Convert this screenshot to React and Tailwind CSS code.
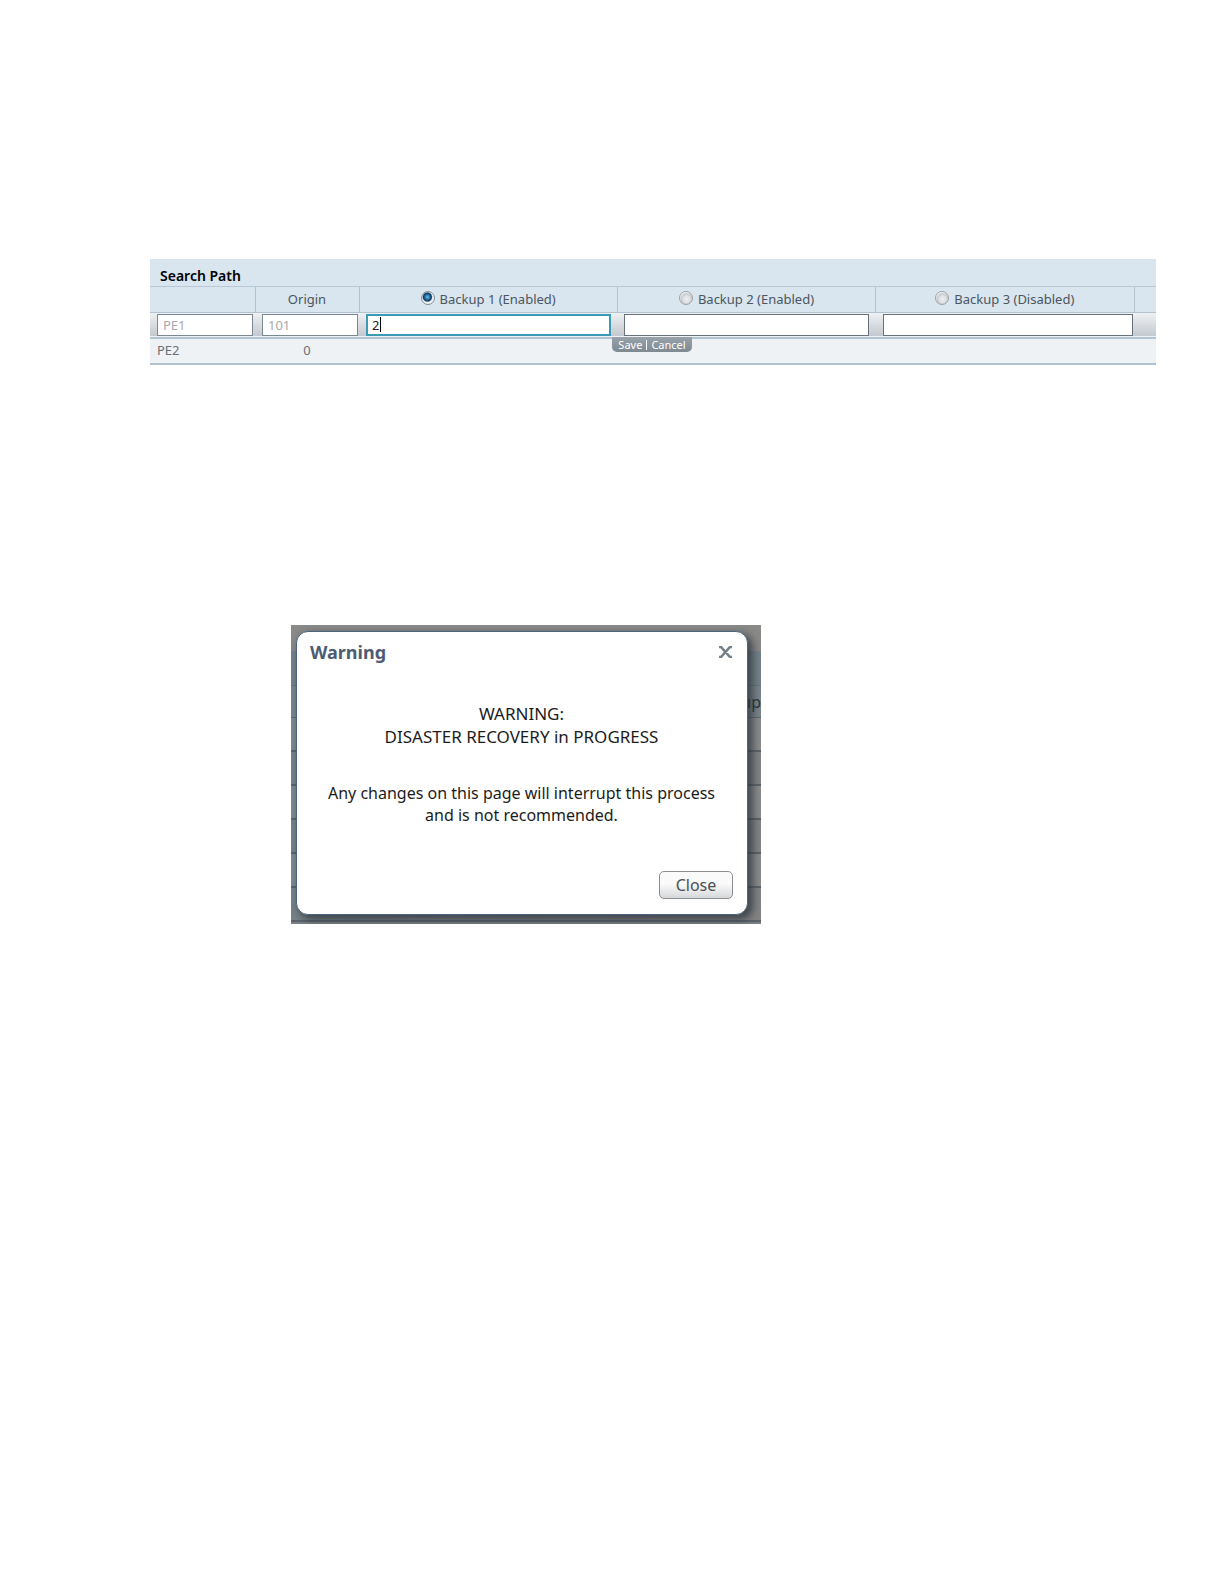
import React, { useState } from "react";

const backups = [
  { id: 1, label: "Backup 1 (Enabled)" },
  { id: 2, label: "Backup 2 (Enabled)" },
  { id: 3, label: "Backup 3 (Disabled)" },
];

const headCell = "border-r border-[#b3c2ce] p-0 font-normal";
const field = "block h-[22px] w-full border bg-white px-[5px] leading-4 outline-none";

function SearchPath() {
  const [selected, setSelected] = useState(1);
  return (
    <section className="relative text-[13px] text-[#4b565e]">
      <table className="w-full table-fixed border-collapse">
        <caption className="h-7 border-b border-[#b9c8d4] bg-[#d9e5ef] px-[10px] pt-[7px] text-left text-sm leading-5 font-semibold text-black">
          Search Path
        </caption>
        <colgroup>
          <col className="w-[105px]" />
          <col className="w-[104px]" />
          <col />
          <col />
          <col />
          <col className="w-[22px]" />
        </colgroup>
        <thead>
          <tr className="h-[25px] border-b border-[#b3c2ce] bg-[#d9e5ef]">
            <th className={headCell} aria-label="Name" />
            <th scope="col" className={headCell}>Origin</th>
            {backups.map((b) => (
              <th key={b.id} scope="col" className={headCell}>
                <label className="flex items-center justify-center gap-[5px]">
                  <input
                    type="radio"
                    name="backup"
                    checked={selected === b.id}
                    onChange={() => setSelected(b.id)}
                    className="mb-0.5 size-[14px] appearance-none rounded-full border border-[#9aa2a8] bg-[radial-gradient(circle_at_55%_60%,#f0f0f1_0,#dcdde0_40%,#c6c9cc_55%,#f5f5f5_70%)] checked:border-[#7f8e98] checked:bg-[radial-gradient(circle_at_45%_42%,#6fc3ee_0,#1f6fa8_25%,#173a56_42%,#eef2f5_55%)]"
                  />
                  <span>{b.label}</span>
                </label>
              </th>
            ))}
            <th className="p-0" aria-label="More" />
          </tr>
        </thead>
        <tbody>
          <tr className="h-[26px] border-b-2 border-[#b0c5d4] bg-linear-to-b from-[#f1f3f5] to-[#c3c9cf]">
            <td className="py-0 pr-[2px] pl-[7px]">
              <input aria-label="Name" readOnly defaultValue="PE1" className={`${field} border-[#7b8992] text-[#a9a9a9]`} />
            </td>
            <td className="py-0 pr-px pl-[7px]">
              <input aria-label="Origin" readOnly defaultValue="101" className={`${field} border-[#7b8992] text-[#a9a9a9]`} />
            </td>
            <td className="py-0 pr-[6px] pl-[7px]">
              <div className="flex h-[22px] items-center border-2 border-[#3b9ab5] bg-white px-1">
                <input aria-label="Backup 1" defaultValue="2" className="w-2 bg-transparent p-0 leading-4 text-[#222] outline-none" />
                <span className="h-[15px] w-px bg-black" />
              </div>
            </td>
            <td className="py-0 pr-[7px] pl-[7px]">
              <input aria-label="Backup 2" className={`${field} border-[#66737b]`} />
            </td>
            <td className="py-0 pr-px pl-[7px]">
              <input aria-label="Backup 3" className={`${field} border-[#66737b]`} />
            </td>
            <td />
          </tr>
          <tr className="h-[26px] border-b-2 border-[#b0c2d0] bg-[#eff2f5] text-[#697177]">
            <td className="p-0 pl-[7px]">PE2</td>
            <td className="p-0 text-center">0</td>
            <td colSpan={4} />
          </tr>
        </tbody>
      </table>
      <div className="absolute top-[78px] left-1/2 -ml-[41px] flex h-[15px] w-[80px] items-center justify-center gap-1 rounded-b-[5px] bg-linear-to-b from-[#98a2aa] to-[#7e8991] text-[11px] leading-3 text-white">
        <button type="button">Save</button>
        <span className="h-[10px] w-px bg-white" />
        <button type="button">Cancel</button>
      </div>
    </section>
  );
}

function WarningDialog() {
  return (
    <section className="relative w-[470px] overflow-hidden bg-linear-to-r from-[#7e8990] to-[#8c8c8c]">
      <div className="h-[26px] bg-[#8a8a88]" />
      <div className="h-[35px] border-b border-[#68747c] bg-[#76838a]" />
      <div className="flex h-8 items-center justify-end border-b border-[#5f6a72] bg-[#7b868c] text-base text-[#2c3136]">up</div>
      <div className="h-[34px] border-b-2 border-[#5b646c]" />
      <div className="h-[34px] border-b-2 border-[#5b646c] bg-black/5" />
      <div className="h-[34px] border-b-2 border-[#5b646c]" />
      <div className="h-[34px] border-b-2 border-[#5b646c] bg-black/5" />
      <div className="h-[34px] border-b-2 border-[#5b646c]" />
      <div className="h-[34px] border-b-2 border-[#5b646c] bg-black/5" />
      <div className="h-0.5 bg-[#7c8083]" />
      <div
        role="dialog"
        aria-labelledby="warning-title"
        className="absolute top-[6px] right-[13px] bottom-[9px] left-[5px] flex flex-col rounded-[12px] border border-[#4b6580] bg-white pt-2 pr-[14px] pb-[15px] pl-[13px] text-base text-[#1c1c1c] shadow-[4px_4px_8px_1px_rgba(40,48,56,0.75)]"
      >
        <div className="flex items-center justify-between">
          <h2 id="warning-title" className="text-lg leading-6 font-bold text-[#4d5b73]">Warning</h2>
          <button type="button" aria-label="Close dialog">
            <svg width="15" height="12" viewBox="0 0 15 12" fill="none" stroke="#74818a" strokeWidth="3">
              <path d="M1 1 H3 L12 11 H14 M14 1 H12 L3 11 H1" strokeWidth="2.6" />
            </svg>
          </button>
        </div>
        <p className="mt-[38px] text-center text-[17px] leading-[23px]">
          WARNING:
          <br />
          DISASTER RECOVERY in PROGRESS
        </p>
        <p className="mt-[34px] text-center leading-[22px]">
          Any changes on this page will interrupt this process
          <br />
          and is not recommended.
        </p>
        <button
          type="button"
          className="mt-auto h-7 w-[74px] self-end rounded-[5px] border border-[#8c8f92] bg-linear-to-b from-[#fafafa] from-45% to-[#d6d8da] leading-5 text-[#4c5052]"
        >
          Close
        </button>
      </div>
    </section>
  );
}

export default function App() {
  return (
    <main className="bg-white pt-[259px] pr-[69px] pb-[120px] pl-[150px] font-['Noto_Sans',sans-serif]">
      <SearchPath />
      <div className="mt-[260px] ml-[141px]">
        <WarningDialog />
      </div>
    </main>
  );
}
